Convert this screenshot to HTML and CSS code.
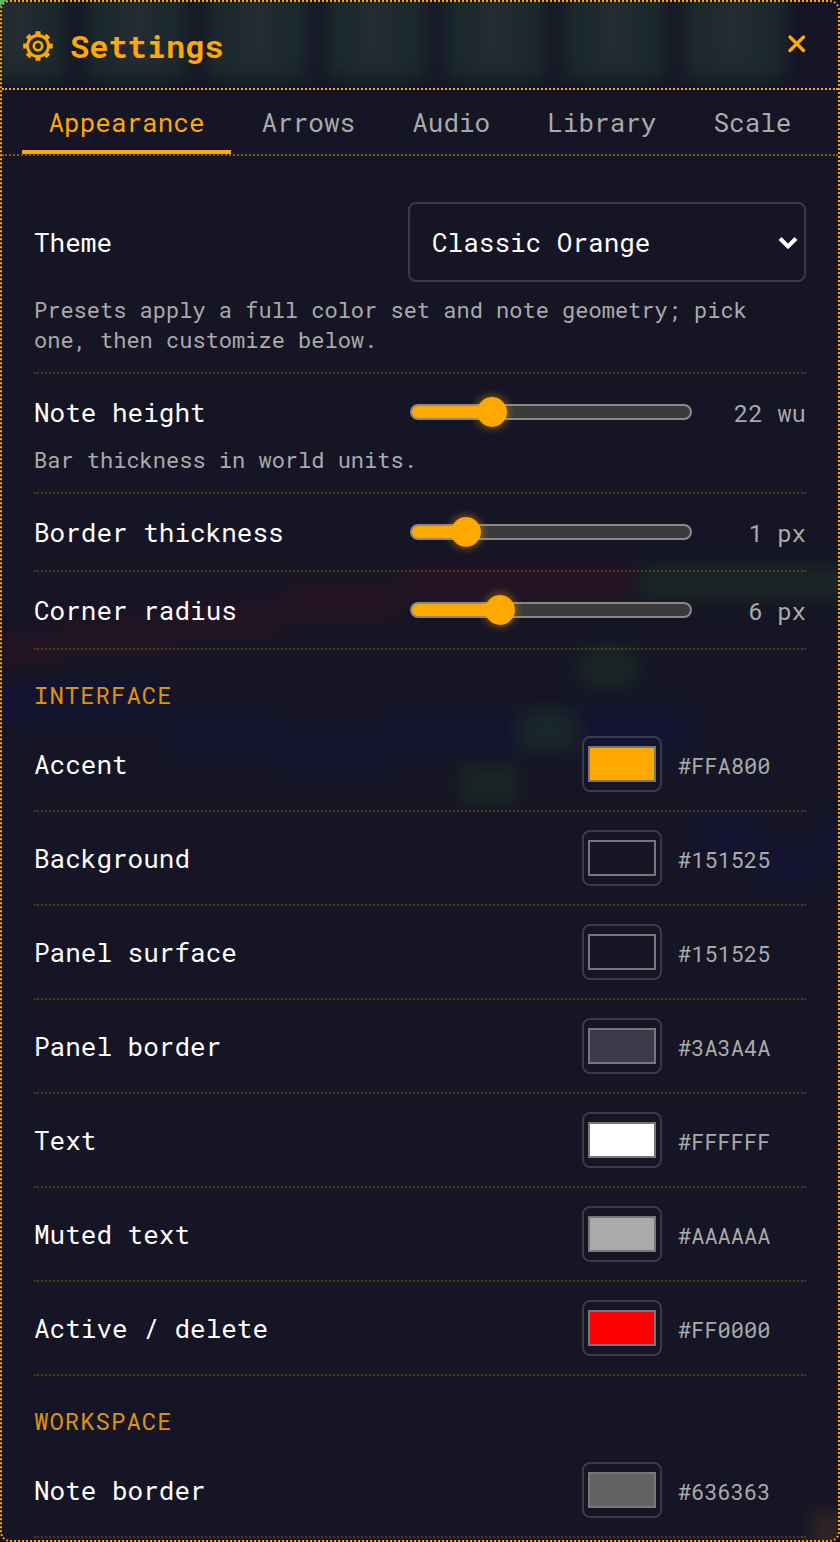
FILE: index.html
```html
<!DOCTYPE html>
<html lang="en">
<head>
<meta charset="utf-8">
<meta name="viewport" content="width=device-width, initial-scale=1">
<title>Settings</title>
<link rel="stylesheet" href="styles.css">
</head>
<body>
<main class="panel">
  <svg class="backdrop" viewBox="0 0 840 1542" preserveAspectRatio="none" aria-hidden="true">
    <defs>
      <filter id="soft" x="-20%" y="-20%" width="140%" height="140%" color-interpolation-filters="sRGB"><feGaussianBlur stdDeviation="9"/></filter>
    </defs>
    <g fill="#44a161" filter="url(#soft)">
      <rect x="-50" y="-40" width="114" height="118"/>
      <rect x="84" y="-40" width="102" height="118"/>
      <rect x="205" y="-40" width="102" height="118"/>
      <rect x="325" y="-40" width="102" height="118"/>
      <rect x="445" y="-40" width="102" height="118"/>
      <rect x="565" y="-40" width="102" height="118"/>
      <rect x="685" y="-40" width="102" height="118"/>
    </g>
    <g fill="#84b088" filter="url(#soft)">
      <rect x="0" y="-40" width="32" height="104"/>
      <rect x="118" y="-40" width="34" height="104"/>
      <rect x="239" y="-40" width="34" height="104"/>
      <rect x="359" y="-40" width="34" height="104"/>
      <rect x="479" y="-40" width="34" height="104"/>
      <rect x="599" y="-40" width="34" height="104"/>
      <rect x="719" y="-40" width="34" height="104"/>
    </g>
    <g fill="#800e18" filter="url(#soft)">
      <rect x="400" y="565" width="238" height="36"/>
      <rect x="280" y="583" width="120" height="36"/>
      <rect x="170" y="603" width="110" height="34"/>
      <rect x="60" y="620" width="110" height="34"/>
      <rect x="-20" y="636" width="80" height="30"/>
    </g>
    <g fill="#368620" filter="url(#soft)">
      <rect x="642" y="565" width="220" height="36"/>
      <rect x="580" y="646" width="58" height="42"/>
      <rect x="460" y="764" width="58" height="40"/>
    </g>
    <g fill="#101480" filter="url(#soft)">
      <rect x="-20" y="682" width="170" height="42"/>
      <rect x="164" y="716" width="112" height="38"/>
      <rect x="276" y="730" width="114" height="38"/>
      <rect x="390" y="714" width="130" height="38"/>
      <rect x="580" y="710" width="114" height="42"/>
      <rect x="698" y="816" width="60" height="38"/>
      <rect x="758" y="844" width="60" height="42"/>
      <rect x="826" y="816" width="32" height="46"/>
    </g>
    <rect x="520" y="710" width="58" height="42" fill="#309050" filter="url(#soft)"/>
    <rect x="812" y="1514" width="44" height="44" fill="#c08020" filter="url(#soft)"/>
  </svg>

  <header class="header">
    <h1 class="title">
      <svg class="gear" viewBox="0 0 32 32" fill="none" stroke="currentColor" aria-hidden="true">
        <circle cx="16" cy="16" r="10.500" stroke-width="2.800"/>
        <circle cx="16" cy="16" r="4.200" stroke-width="2.600"/>
        <path stroke-width="5" d="M16 5.500V1.200M16 26.500V30.800M5.500 16H1.200M26.500 16H30.800M8.200 8.200L5.600 5.600M23.800 23.800L26.400 26.400M8.200 23.800L5.600 26.400M23.800 8.200L26.400 5.600"/>
      </svg>
      Settings
    </h1>
    <button class="close" type="button" aria-label="Close">
      <svg class="close-icon" viewBox="0 0 18 18" fill="none" stroke="currentColor" stroke-width="3.400" stroke-linecap="round" aria-hidden="true"><path d="M2 2L15.500 15.500M15.500 2L2 15.500"/></svg>
    </button>
  </header>

  <nav class="tabs" role="tablist">
    <button class="tab tab-active" type="button" role="tab" aria-selected="true">Appearance</button>
    <button class="tab" type="button" role="tab" aria-selected="false">Arrows</button>
    <button class="tab" type="button" role="tab" aria-selected="false">Audio</button>
    <button class="tab" type="button" role="tab" aria-selected="false">Library</button>
    <button class="tab" type="button" role="tab" aria-selected="false">Scale</button>
  </nav>

  <div class="body">
    <div class="row">
      <div class="line">
        <label class="label" for="theme">Theme</label>
        <div class="control select-box">
          <select class="select" id="theme"><option>Classic Orange</option></select>
          <svg class="chevron" viewBox="0 0 20 14" fill="none" stroke="currentColor" stroke-width="4" aria-hidden="true"><path d="M2 2.500L10 10.500L18 2.500"/></svg>
        </div>
      </div>
      <p class="hint">Presets apply a full color set and note geometry; pick one, then customize below.</p>
    </div>
    <div class="row">
      <div class="line">
        <label class="label" for="height">Note height</label>
        <div class="control slider"><input class="range" id="height" type="range" min="0" max="1000" value="260" style="--fill:29%"><output class="value" for="height">22 wu</output></div>
      </div>
      <p class="hint">Bar thickness in world units.</p>
    </div>
    <div class="row">
      <div class="line">
        <label class="label" for="thickness">Border thickness</label>
        <div class="control slider"><input class="range" id="thickness" type="range" min="0" max="1000" value="154" style="--fill:20%"><output class="value" for="thickness">1 px</output></div>
      </div>
    </div>
    <div class="row">
      <div class="line">
        <label class="label" for="radius">Corner radius</label>
        <div class="control slider"><input class="range" id="radius" type="range" min="0" max="1000" value="293" style="--fill:32%"><output class="value" for="radius">6 px</output></div>
      </div>
    </div>

    <h2 class="section">INTERFACE</h2>
    <div class="row"><div class="line"><label class="label" for="accent">Accent</label><div class="color"><input class="swatch" id="accent" type="color" value="#ffa800"><output class="hex" for="accent">#FFA800</output></div></div></div>
    <div class="row"><div class="line"><label class="label" for="background">Background</label><div class="color"><input class="swatch" id="background" type="color" value="#151525"><output class="hex" for="background">#151525</output></div></div></div>
    <div class="row"><div class="line"><label class="label" for="surface">Panel surface</label><div class="color"><input class="swatch" id="surface" type="color" value="#151525"><output class="hex" for="surface">#151525</output></div></div></div>
    <div class="row"><div class="line"><label class="label" for="border">Panel border</label><div class="color"><input class="swatch" id="border" type="color" value="#3a3a4a"><output class="hex" for="border">#3A3A4A</output></div></div></div>
    <div class="row"><div class="line"><label class="label" for="text">Text</label><div class="color"><input class="swatch" id="text" type="color" value="#ffffff"><output class="hex" for="text">#FFFFFF</output></div></div></div>
    <div class="row"><div class="line"><label class="label" for="muted">Muted text</label><div class="color"><input class="swatch" id="muted" type="color" value="#aaaaaa"><output class="hex" for="muted">#AAAAAA</output></div></div></div>
    <div class="row"><div class="line"><label class="label" for="active">Active / delete</label><div class="color"><input class="swatch" id="active" type="color" value="#ff0000"><output class="hex" for="active">#FF0000</output></div></div></div>

    <h2 class="section">WORKSPACE</h2>
    <div class="row"><div class="line"><label class="label" for="note-border">Note border</label><div class="color"><input class="swatch" id="note-border" type="color" value="#636363"><output class="hex" for="note-border">#636363</output></div></div></div>
  </div>
</main>
</body>
</html>
```

FILE: styles.css
```css
:root {
  --accent: #ffa800;
  --surface: #151525;
  --line: #3a3a4a;
  --muted: #aaaaaa;
}

* {
  box-sizing: border-box;
}

body {
  margin: 0;
  background: radial-gradient(circle at 0 0, #50c060 6px, #12121c 9px);
  color: #fff;
  font-family: "Roboto Mono", "DejaVu Sans Mono", "Liberation Mono", monospace;
  font-size: 26px;
}

button,
input,
select {
  margin: 0;
  color: inherit;
  font: inherit;
}

.panel {
  position: relative;
  min-height: 100vh;
  overflow: hidden;
  border: 2px dotted var(--accent);
  border-radius: 10px;
  background: var(--surface);
}

.backdrop {
  position: absolute;
  inset: 0;
  width: 100%;
  height: 100%;
  opacity: 0.15;
}

.header,
.tabs,
.body {
  position: relative;
}

.header {
  display: flex;
  align-items: center;
  justify-content: space-between;
  height: 88px;
  padding: 0 20px 2px;
  border-bottom: 2px dotted var(--accent);
  color: var(--accent);
}

.title {
  display: flex;
  align-items: center;
  gap: 16px;
  margin: 0;
  padding-top: 4px;
  font-size: 32px;
  line-height: 40px;
}

.gear {
  width: 32px;
  height: 32px;
}

.close {
  display: flex;
  padding: 12px;
  border: 0;
  background: none;
}

.close-icon {
  width: 18px;
  height: 18px;
}

.tabs {
  display: flex;
  gap: 4px;
  padding: 0 20px;
  border-bottom: 2px dotted #815a19;
}

.tab {
  flex: 1 1 auto;
  height: 64px;
  padding: 4px 0 0;
  border: 0;
  border-bottom: 4px solid transparent;
  background: none;
  color: var(--muted);
  text-align: center;
}

.tab-active {
  border-color: var(--accent);
  color: var(--accent);
}

.body {
  padding: 28px 32px 2px;
}

.row {
  padding: 18px 0;
  border-bottom: 2px dotted rgba(255, 168, 0, 0.25);
}

.line {
  display: flex;
  align-items: center;
  justify-content: space-between;
  min-height: 40px;
}

.label {
  line-height: 40px;
}

.control {
  flex: 0 1 398px;
  min-width: 0;
}

.select-box {
  position: relative;
}

.select {
  display: block;
  width: 100%;
  height: 80px;
  padding: 0 48px 0 22px;
  border: 2px solid var(--line);
  border-radius: 8px;
  background: var(--surface);
  appearance: none;
}

.chevron {
  position: absolute;
  top: 34px;
  right: 8px;
  width: 20px;
  height: 14px;
  pointer-events: none;
}

.hint {
  margin: 13px 0 -1px;
  color: var(--muted);
  font-size: 22px;
  line-height: 30px;
}

.slider {
  display: flex;
  align-items: center;
  gap: 16px;
  padding-left: 2px;
}

.range {
  flex: 1;
  min-width: 0;
  height: 16px;
  border: 2px solid #888;
  border-radius: 8px;
  background: linear-gradient(to right, var(--accent) var(--fill), #3b3b3b var(--fill));
  appearance: none;
}

.range::-webkit-slider-thumb {
  width: 32px;
  height: 32px;
  border: 1px solid transparent;
  border-radius: 50%;
  background: var(--accent);
  background-clip: padding-box;
  box-shadow: 0 0 8px rgba(255, 168, 0, 0.5);
  appearance: none;
}

.value {
  width: 98px;
  padding-top: 2px;
  color: var(--muted);
  font-size: 24px;
  line-height: 38px;
  text-align: right;
}

.section {
  margin: 0;
  padding: 29px 0 7px;
  color: #dd9307;
  font-size: 24px;
  font-weight: 400;
  line-height: 32px;
  letter-spacing: 1px;
}

.color {
  display: flex;
  align-items: center;
  gap: 16px;
}

.swatch {
  width: 80px;
  height: 56px;
  padding: 0;
  border: 2px solid var(--line);
  border-radius: 8px;
  background: transparent;
  appearance: none;
}

.swatch::-webkit-color-swatch-wrapper {
  padding: 8px 4px;
}

.swatch::-webkit-color-swatch {
  border: 2px solid #777;
}

.hex {
  width: 128px;
  padding-top: 2px;
  color: var(--muted);
  font-size: 22px;
}
```
